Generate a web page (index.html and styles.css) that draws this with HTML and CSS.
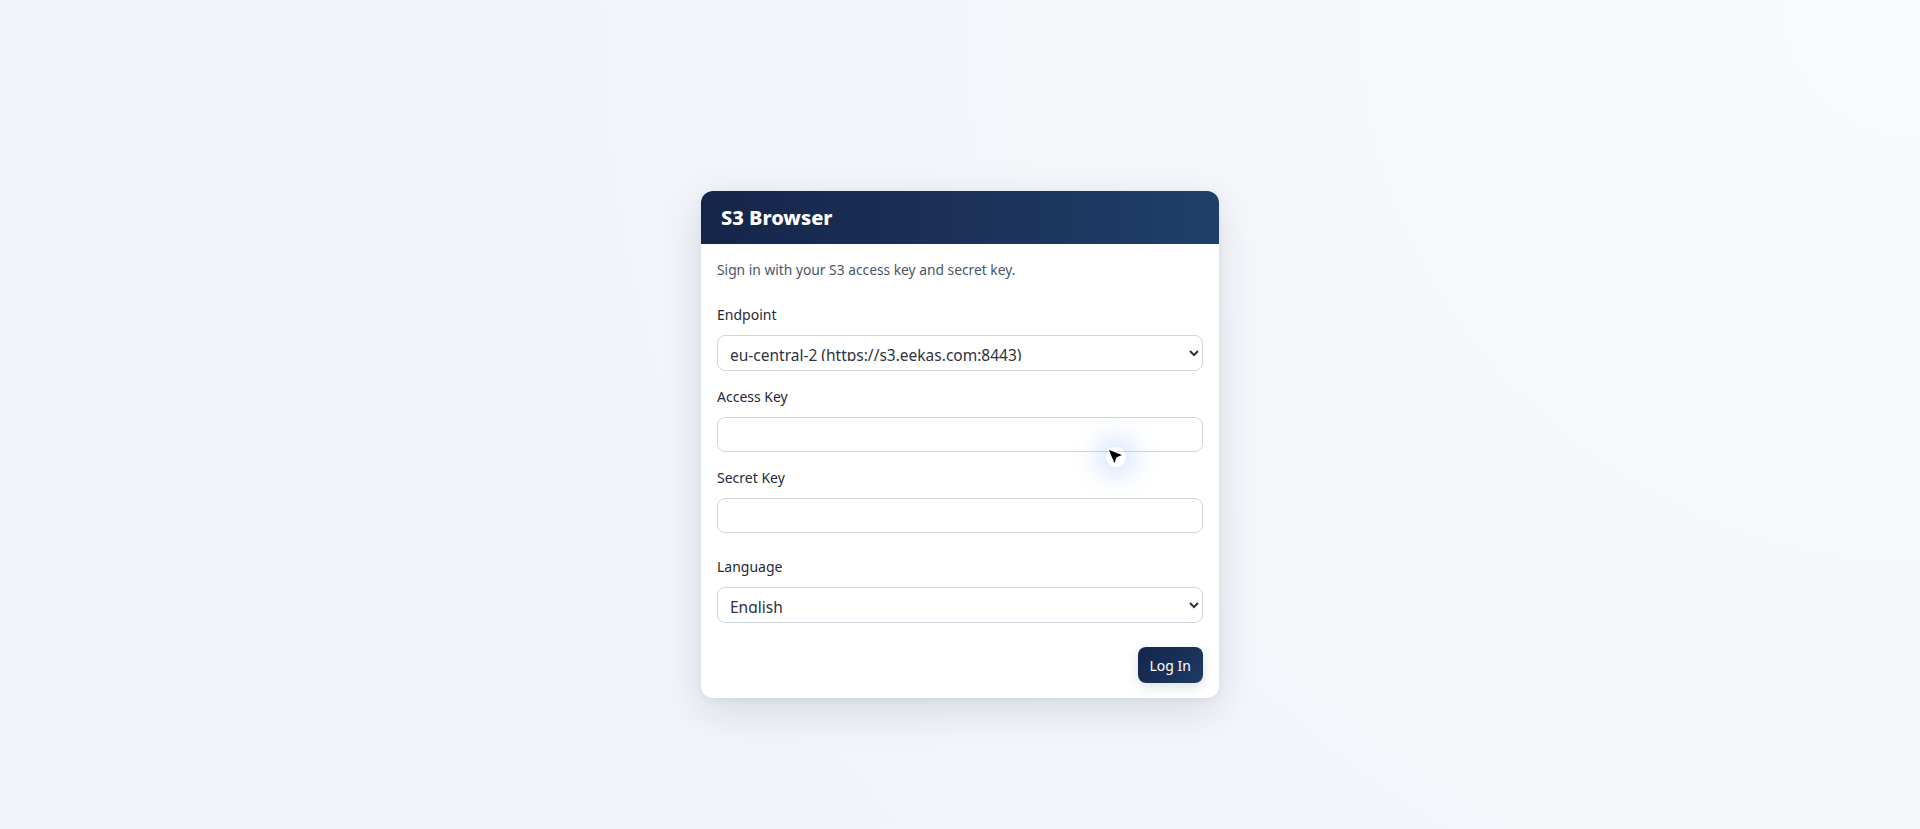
FILE: index.html
```html
<!DOCTYPE html>
<html lang="en">
  <head>
    <meta charset="utf-8" />
    <meta name="viewport" content="width=device-width, initial-scale=1" />
    <title>S3 Browser</title>
    <link rel="stylesheet" href="styles.css">
  </head>
  <body>
    <div class="login-page">
      <div class="login-card">
        <div class="login-header">
          <h1>S3 Browser</h1>
        </div>
        <form class="login-body" onsubmit="return false">
          <p class="login-intro">Sign in with your S3 access key and secret key.</p>

          <div class="field">
            <label for="endpoint">Endpoint</label>
            <select id="endpoint">
              <option>eu-central-2 (https://s3.eekas.com:8443)</option>
            </select>
          </div>

          <div class="field">
            <label for="access-key">Access Key</label>
            <input id="access-key" type="text" />
          </div>

          <div class="field">
            <label for="secret-key">Secret Key</label>
            <input id="secret-key" type="password" />
          </div>

          <div class="field field-lang">
            <label for="language">Language</label>
            <select id="language">
              <option>English</option>
            </select>
          </div>

          <div class="actions">
            <button type="submit" class="btn-login">Log In</button>
          </div>
        </form>
      </div>
    </div>

    <!-- pointer as it shows in the capture -->
    <div class="cursor">
      <svg width="20" height="20" viewBox="0 0 20 20">
        <path d="M1.5 1.5 L18 8 L11 10.8 L8.5 18 Z" fill="#000" stroke="#fff" stroke-width="1.4" stroke-linejoin="round"/>
      </svg>
    </div>
  </body>
</html>
```

FILE: styles.css
```css
html,
body {
  margin: 0;
  height: 100%;
}
body {
  font-family: "Noto Sans", "DejaVu Sans", sans-serif;
  background: #f1f4f9;
  background-image: radial-gradient(circle at 100% 0%, #f9fafd 0%, #f5f7fb 35%, #f1f4f9 65%);
  color: #1f2937;
}

.login-page {
  display: flex;
  justify-content: center;
  padding-top: 191px;
}

.login-card {
  width: 518px;
  background: #fff;
  border-radius: 12px;
  box-shadow: 0 12px 40px rgba(20, 40, 80, 0.13), 0 2px 8px rgba(20, 40, 80, 0.05);
  overflow: hidden;
}

.login-header {
  background: linear-gradient(90deg, #15254a 0%, #1b3158 50%, #1f3f6b 100%);
  padding: 14px 20px;
}
.login-header h1 {
  margin: 0;
  font-size: 20px;
  line-height: 25px;
  font-weight: 800;
  color: #fff;
}

.login-body {
  padding: 16px 16px 15px;
}

.login-intro {
  margin: 0 0 25px;
  font-size: 13.8px;
  line-height: 20px;
  color: #4a5568;
}

.field {
  margin-bottom: 16px;
}
.field label {
  display: block;
  font-size: 14px;
  line-height: 20px;
  margin-bottom: 10px;
  color: #1f2937;
}
.field-lang {
  margin-top: 24px;
  margin-bottom: 24px;
}

.field select,
.field input {
  display: block;
  width: 100%;
  box-sizing: border-box;
  border: 1px solid #cfd6e0;
  border-radius: 8px;
  background: #fff;
  font-family: "Noto Sans", "DejaVu Sans", sans-serif;
  color: #2d3340;
  outline: none;
}
.field select {
  height: 36px;
  padding: 7px 8px 9px;
  font-size: 15.5px;
}
.field input {
  height: 35px;
  padding: 6px 12px;
  font-size: 14px;
}

.actions {
  display: flex;
  justify-content: flex-end;
}
.btn-login {
  height: 36px;
  padding: 0 12px;
  border: none;
  border-radius: 8px;
  background: linear-gradient(135deg, #15254a 0%, #1e3a64 100%);
  color: #fff;
  font-family: "Noto Sans", "DejaVu Sans", sans-serif;
  font-size: 14px;
  cursor: pointer;
  box-shadow: 0 4px 12px rgba(20, 40, 80, 0.15);
}

.cursor {
  position: absolute;
  left: 1106px;
  top: 447px;
  width: 20px;
  height: 20px;
  border-radius: 50%;
  box-shadow: 0 0 22px 12px rgba(90, 150, 255, 0.2);
  pointer-events: none;
}
.cursor svg {
  display: block;
}
```
